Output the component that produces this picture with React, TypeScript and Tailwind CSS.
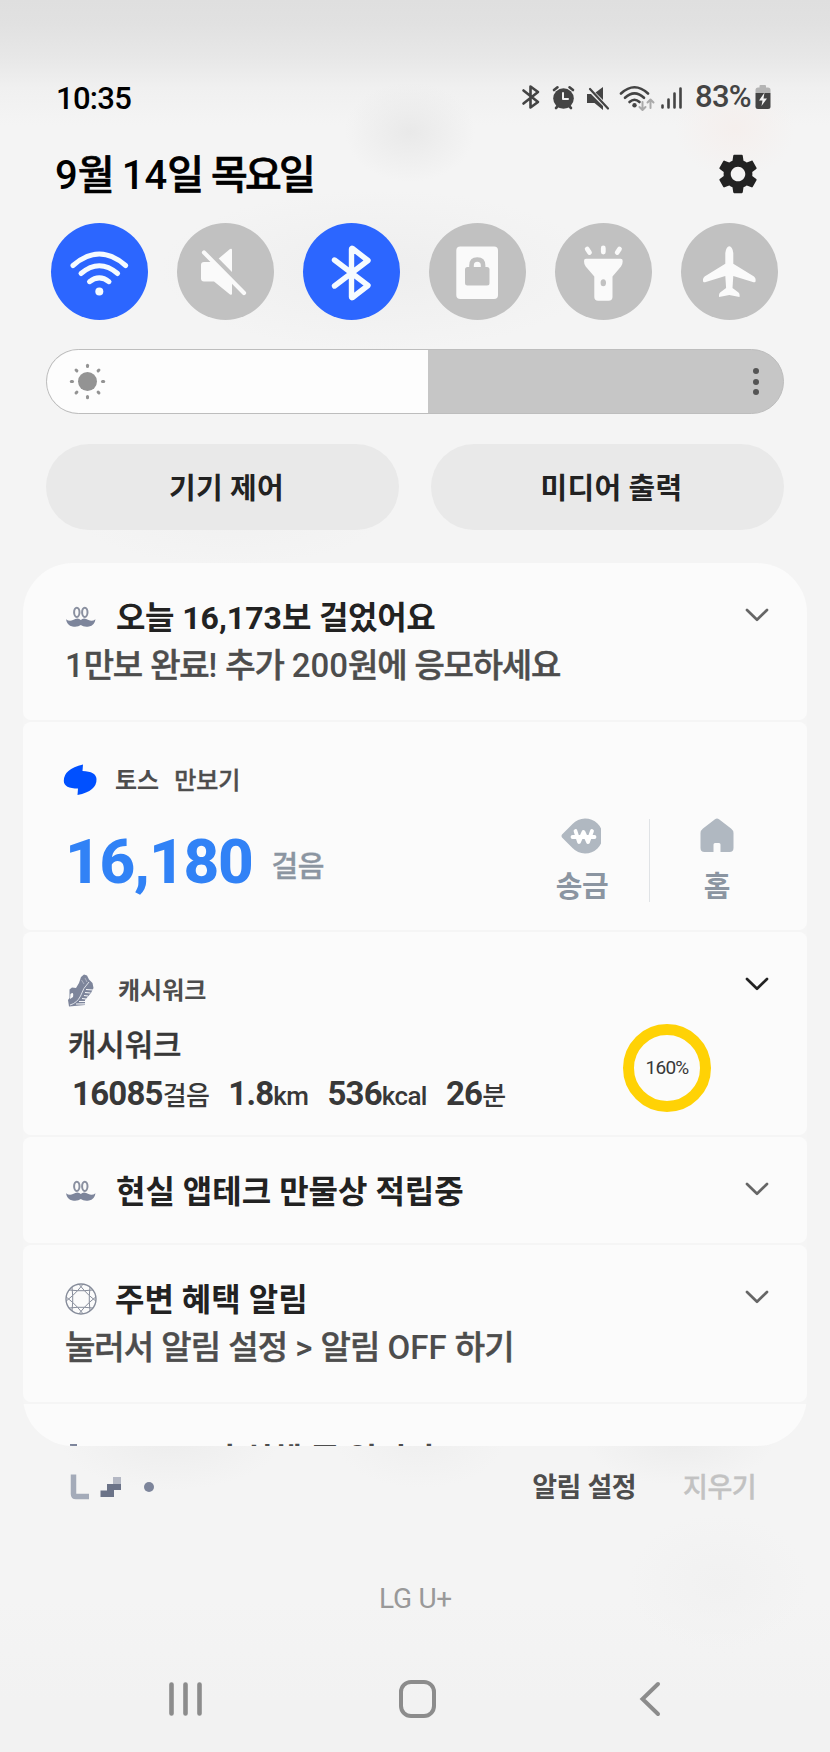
import React from "react";

const HANGUL = /([\u3131-\uD7A3]+)/;

function Mixed({ text, ko = "tracking-[-0.03em]" }: { text: string; ko?: string }) {
  return (
    <>
      {text.split(HANGUL).map((part, i) =>
        HANGUL.test(part) ? (
          <span key={i} className={ko}>
            {part}
          </span>
        ) : (
          part
        ),
      )}
    </>
  );
}

function StatusIcons() {
  return (
    <svg width="162" height="30" viewBox="0 0 162 30" className="shrink-0" fill="none" stroke="#444" strokeLinecap="round" strokeLinejoin="round">
      <path d="M2.5 8.5 L17 20 L9.5 25.5 V4.5 L17 10 L2.5 21.5" strokeWidth="2.6" />
      <g>
        <circle cx="42.500" cy="16.500" r="10.3" fill="#444" stroke="none" />
        <path d="M33 8 L36.500 5.300 M52 8 L48.500 5.300 M35 26 L37 24 M50 26 L48 24" strokeWidth="2.6" />
        <path d="M42 11 V17 H47" stroke="#f3f3f3" strokeWidth="2" />
      </g>
      <g stroke="none" fill="#444">
        <path d="M66 12 H70 L82 24 V28 L73.500 21 H66 Z" />
        <path d="M74.500 10.500 L82 5 V18 Z" />
      </g>
      <path d="M69 7 L87 26.5" strokeWidth="2.2" />
      <g strokeWidth="2.6">
        <path d="M100 11.500 Q113.500 -1 127 11.500" />
        <path d="M104 15.800 Q113.500 7 123 15.800" />
        <path d="M108.500 20 Q113.500 15.500 118.500 20" />
      </g>
      <circle cx="113.500" cy="23.200" r="2.200" fill="#444" stroke="none" />
      <path d="M121.500 20 V27.500 M118.500 25 L121.500 28 L124.500 25 M129.500 26 V18.500 M126.500 20.500 L129.500 17.500 L132.500 20.500" stroke="#aaa" strokeWidth="2" />
      <path d="M141.500 23.500 V25.500 M147.500 17.500 V25.500 M153.500 11.500 V25.500 M159.500 6.500 V25.500" strokeWidth="2.600" />
    </svg>
  );
}

function Battery() {
  return (
    <svg width="16" height="26" viewBox="0 0 16 26" className="shrink-0">
      <path d="M0.500 9 V6 Q0.500 3.500 3 3.500 H4.500 V2 Q4.500 1 5.500 1 H10 Q11 1 11 2 V3.500 H13 Q15.500 3.500 15.500 6 V9 Z" fill="#b4b4b4" />
      <path d="M0.500 9 H15.500 V22.500 Q15.500 25 13 25 H3 Q0.500 25 0.500 22.500 Z" fill="#444" />
      <path d="M9.500 8.500 L4 16.500 H7.500 L6.500 22 L12 14.500 H8.500 Z" fill="#f4f4f4" />
    </svg>
  );
}

function Gear() {
  return (
    <svg width="46" height="46" viewBox="0 0 24 24" fill="#222" className="shrink-0">
      <path d="M19.430 12.980c.04-.32.07-.64.07-.98s-.03-.66-.07-.98l2.110-1.650c.19-.15.24-.42.12-.64l-2-3.460c-.12-.22-.39-.3-.61-.22l-2.490 1c-.52-.4-1.080-.73-1.690-.98l-.38-2.650C14.460 2.180 14.250 2 14 2h-4c-.25 0-.46.18-.49.42l-.38 2.650c-.61.25-1.170.59-1.690.98l-2.490-1c-.23-.09-.49 0-.61.22l-2 3.460c-.13.22-.07.49.12.64l2.110 1.650c-.04.32-.07.65-.07.98s.03.66.07.98l-2.110 1.650c-.19.15-.24.42-.12.64l2 3.460c.12.22.39.3.61.22l2.490-1c.52.4 1.080.73 1.690.98l.38 2.650c.03.24.24.42.49.42h4c.25 0 .46-.18.49-.42l.38-2.650c.61-.25 1.170-.59 1.690-.98l2.490 1c.23.09.49 0 .61-.22l2-3.460c.12-.22.07-.49-.12-.64l-2.110-1.650zM12 15.800c-2.100 0-3.800-1.700-3.800-3.800s1.700-3.800 3.800-3.800 3.800 1.700 3.800 3.800-1.700 3.800-3.800 3.800z" />
    </svg>
  );
}

function Toggle({ on, children }: { on?: boolean; children: React.ReactNode }) {
  return (
    <button className={on ? "size-[97px] rounded-full bg-[#2c66ff] text-[#f5fbff]" : "size-[97px] rounded-full bg-[#c1c1c1] text-[#fafafa]"}>
      <svg width="97" height="97" viewBox="0 0 97 97" fill="none" stroke="currentColor" strokeLinecap="round" strokeLinejoin="round">
        {children}
      </svg>
    </button>
  );
}

function Toggles() {
  return (
    <div className="mt-[22px] flex gap-[29px] pl-[51px]">
      <Toggle on>
        <g strokeWidth="5">
          <path d="M22 42.500 Q48.300 19.500 74.600 42.500" />
          <path d="M30 50.500 Q48.300 35 66.600 50.500" />
          <path d="M38.500 58.700 Q48.300 51 58 58.700" />
        </g>
        <circle cx="48.300" cy="68.500" r="4" fill="currentColor" stroke="none" />
      </Toggle>
      <Toggle>
        <g fill="currentColor" stroke="none">
          <path d="M27 39 H35.500 L55 58.500 V70.500 Q55 72.500 53 71.500 L37 58.500 H27 Q24 58.500 24 55.500 V42 Q24 39 27 39 Z" />
          <path d="M41.700 35.500 L53 26 Q55 25 55 27 V49 Z" />
        </g>
        <path d="M27 29.500 L67 70" strokeWidth="4.200" />
      </Toggle>
      <Toggle on>
        <path d="M31.500 37 L65 62.500 L49.500 74.500 Q48.500 75 48.500 74 V26 Q48.500 25 49.500 25.500 L65 37.500 L31.500 63" strokeWidth="5.400" />
      </Toggle>
      <Toggle>
        <rect x="27.300" y="23.500" width="41.700" height="52.500" rx="4" fill="currentColor" stroke="none" />
        <path d="M42.500 46 V42.500 Q42.500 36.500 48.300 36.500 Q54.100 36.500 54.100 42.500 V46" stroke="#c1c1c1" strokeWidth="4.600" />
        <rect x="36" y="44" width="24.500" height="18.500" rx="2.500" fill="#c1c1c1" stroke="none" />
      </Toggle>
      <Toggle>
        <path d="M31 35.700 H65.700 Q67.700 35.700 67.700 38 Q67.700 41.500 66 43.500 L57.500 53.500 V74 Q57.500 77.700 53.500 77.700 H43.200 Q39.300 77.700 39.300 74 V53.500 L30.700 43.500 Q29 41.500 29 38 Q29 35.700 31 35.700 Z" fill="currentColor" stroke="none" />
        <ellipse cx="48.300" cy="59.800" rx="2.700" ry="3.500" fill="#c1c1c1" stroke="none" />
        <path d="M48.300 25 V29 M32.200 26 L34.500 29.500 M64.500 26 L62.200 29.500" strokeWidth="4.800" />
      </Toggle>
      <Toggle>
        <path
          d="M48.300 23.300 Q51.300 23.300 52.300 30 V40.700 L73 53.500 Q74.600 54.800 74.600 56.500 V58 Q74.600 59.800 72.600 59.200 L52.300 53 L51.500 65 L57.500 69.500 Q59 71 58.500 74 L48.300 72 L38.100 74 Q37.600 71 39.100 69.500 L45.100 65 L44.300 53 L24 59.200 Q22 59.800 22 58 V56.500 Q22 54.800 23.600 53.500 L44.300 40.700 V30 Q45.300 23.300 48.300 23.300 Z"
          fill="currentColor"
          stroke="none"
        />
      </Toggle>
    </div>
  );
}

function Brightness() {
  return (
    <div className="mx-[46px] mt-[29px] flex h-[65px] overflow-hidden rounded-full border border-[#bdbdbd] bg-[#c6c6c6]">
      <div className="flex w-[381px] items-center bg-[#fdfdfd] pl-[22px]">
        <svg width="37" height="37" viewBox="-18.500 -18.500 37 37" stroke="#939393" strokeWidth="3" strokeLinecap="round">
          <circle r="9.500" fill="#939393" stroke="none" />
          {[0, 45, 90, 135, 180, 225, 270, 315].map((a) => (
            <path key={a} d="M0 -15 V-16.200" transform={`rotate(${a})`} />
          ))}
        </svg>
      </div>
      <div className="flex flex-1 flex-col items-end justify-center gap-[4.500px] pr-[24px]">
        <span className="size-[6px] rounded-full bg-[#555]" />
        <span className="size-[6px] rounded-full bg-[#555]" />
        <span className="size-[6px] rounded-full bg-[#555]" />
      </div>
    </div>
  );
}

function Chevron({ dark }: { dark?: boolean }) {
  return (
    <svg width="24" height="14" viewBox="0 0 24 14" fill="none" stroke={dark ? "#222" : "#666"} strokeWidth="2.700" strokeLinecap="round" strokeLinejoin="round" className="shrink-0">
      <path d="M2 2 L12 11.800 L22 2" />
    </svg>
  );
}

function Mustache() {
  return (
    <svg width="30" height="22" viewBox="0 0 30 22" className="shrink-0">
      <g fill="none" stroke="#8a90a0" strokeWidth="2">
        <ellipse cx="10.800" cy="6.300" rx="2.700" ry="4.600" />
        <ellipse cx="18.800" cy="6.300" rx="2.700" ry="4.600" />
      </g>
      <path d="M0 13.200 Q3.500 16 7 14 Q12 11 14.800 14 Q17.500 11 22.500 14 Q26 16 29.500 13.200 Q28.500 19.500 23 20.600 Q17.500 21.400 14.800 19 Q12 21.400 6.500 20.600 Q1 19.500 0 13.200 Z" fill="#7d859b" />
    </svg>
  );
}

function Shoe() {
  return (
    <svg width="28" height="33" viewBox="0 0 28 33" className="shrink-0">
      <path d="M14 3 L17 0.500 L20 1.500 L22 5.500 L25.500 9 L26.500 14 L24 19 L18 26 V31 L2 32.500 L1 26 L2.500 24 L2.500 15.500 L5 13.500 L9 14 L12 9 Z" fill="#7d859b" />
      <path d="M3.500 20 Q7 17 6 23 L3 25 Z" fill="#fbfbfb" />
      <path d="M22 8 Q16 14 13.500 22 Q10 29 3 31" fill="none" stroke="#dfe2e9" strokeWidth="1" />
      <path d="M19 15.500 L26 16 M18 18.500 L23.500 19 M17 21.500 L21 22 M15 24.500 L19 25 M12 27.500 L18 27.500 M9 30 L18 29.800" stroke="#f5f6f8" strokeWidth="1.200" />
      <path d="M14.500 6 L17 10 M18 4 L20 8" stroke="#b9bdc9" strokeWidth="0.800" />
    </svg>
  );
}

function Gem() {
  const pt = (r: number, deg: number) =>
    `${(16 + r * Math.cos((deg * Math.PI) / 180)).toFixed(2)} ${(16 + r * Math.sin((deg * Math.PI) / 180)).toFixed(2)}`;
  const facets = Array.from({ length: 8 }, (_, i) => i * 45);
  return (
    <svg width="32" height="32" viewBox="0 0 32 32" fill="none" stroke="#868c9a" strokeWidth="1" strokeLinejoin="round" className="shrink-0">
      <circle cx="16" cy="16" r="15" strokeWidth="1.400" />
      <path d={"M" + facets.map((a) => pt(9, a + 22.5)).join(" L") + " Z"} />
      {facets.map((a) => (
        <path key={a} d={`M${pt(15, a - 8)} L${pt(9, a + 22.5)} L${pt(15, a + 53)}`} />
      ))}
    </svg>
  );
}

function Title({ icon, text, ko = "tracking-normal" }: { icon: React.ReactNode; text: string; ko?: string }) {
  return (
    <div className="flex h-[46px] items-center">
      <div className="flex w-[50px] shrink-0 items-center">{icon}</div>
      <h2 className="pt-px text-[32px] font-bold leading-[46px] text-[#222]">
        <Mixed text={text} ko={ko} />
      </h2>
      <div className="mb-[4px] ml-auto">
        <Chevron />
      </div>
    </div>
  );
}

function Stat({ value, unit }: { value: string; unit: string }) {
  return (
    <div className="flex items-baseline">
      <span className="text-[33px] font-bold tracking-[-0.800px]">{value}</span>
      <span className="text-[26px] font-medium tracking-[-0.600px]">{unit}</span>
    </div>
  );
}

export default function App() {
  return (
    <div className="flex h-[1752px] w-[830px] flex-col overflow-hidden bg-[#f4f4f4] bg-[radial-gradient(65px_50px_at_410px_132px,#e9e9e9_0%,transparent_100%),radial-gradient(60px_50px_at_735px_128px,#f5efed_0%,transparent_100%),radial-gradient(220px_80px_at_380px_270px,#eeeeee_0%,transparent_100%),radial-gradient(150px_45px_at_230px_520px,#f1f1f1_0%,transparent_100%),radial-gradient(110px_50px_at_170px_1440px,#ededed_0%,rgba(244,244,244,0)_100%),radial-gradient(85px_48px_at_420px_1440px,#efefef_0%,rgba(244,244,244,0)_100%),radial-gradient(95px_45px_at_680px_1440px,#ececec_0%,rgba(244,244,244,0)_100%),radial-gradient(90px_70px_at_718px_1584px,#f1f1f1_0%,rgba(244,244,244,0)_100%),linear-gradient(to_bottom,#dfdfdf_0px,#e1e1e1_24px,#e7e7e7_56px,#f0f0f0_88px,#f4f4f4_125px,#f4f4f4_1600px,#f2f2f2_1700px)] font-[Roboto,'Noto_Sans_CJK_KR',sans-serif]">
      <header className="pt-[78px]">
        <div className="flex h-10 items-start pl-[56px] pr-[59px] text-[31px] leading-10">
          <span className="pt-px font-medium tracking-[-0.700px] text-black">10:35</span>
          <div className="ml-auto flex h-[37px] items-center">
            <StatusIcons />
            <span className="ml-[12px] font-medium tracking-[-0.700px] text-[#444]">83%</span>
            <span className="ml-[4px]">
              <Battery />
            </span>
          </div>
        </div>
        <div className="mt-[33px] flex h-[50px] items-start justify-between pl-[55px] pr-[69px]">
          <h1 className="text-[40px] font-medium leading-[50px] text-black">
            <Mixed text="9월 14일 목요일" ko="tracking-[-0.07em] [-webkit-text-stroke:0.7px]" />
          </h1>
          <Gear />
        </div>
      </header>

      <Toggles />
      <Brightness />

      <div className="mx-[46px] mt-[30px] flex justify-between text-[29px] font-bold text-[#222]">
        <button className="h-[86px] w-[353px] rounded-full bg-[#e9e9e9] pl-[8px] pt-[5px]">
          <Mixed text="기기 제어" ko="tracking-[0.01em]" />
        </button>
        <button className="h-[86px] w-[353px] rounded-full bg-[#e9e9e9] pl-[8px] pt-[5px]">
          <Mixed text="미디어 출력" ko="tracking-[0.01em]" />
        </button>
      </div>

      <main className="mx-[23px] mt-[33px] flex h-[883px] shrink-0 flex-col gap-[2px] overflow-hidden rounded-[50px] bg-[#f5f5f5]">
        <section className="h-[157px] shrink-0 rounded-b-lg bg-[#fbfbfb] pl-[43px] pr-[38px] pt-[31px]">
          <Title icon={<Mustache />} text="오늘 16,173보 걸었어요" ko="tracking-[-0.01em]" />
          <p className="-ml-[1px] mt-[3px] text-[33px] font-medium leading-[46px] text-[#4d4d4d]">
            <Mixed text="1만보 완료! 추가 200원에 응모하세요" ko="tracking-[-0.038em] [-webkit-text-stroke:0.5px]" />
          </p>
        </section>

        <section className="flex h-[208px] shrink-0 flex-col rounded-lg bg-[#fbfbfb] pl-[40px] pr-[24px] pt-[38px]">
          <div className="flex h-[40px] items-center text-[24px] leading-[40px] text-[#4d4d4d]">
            <svg width="34" height="32" viewBox="0 0 34 32" className="shrink-0">
              <path d="M20 0.500 L19.500 7 Q33 7.500 33.500 15 Q34 27 14.500 31 L15 24.500 Q1 24.500 0.800 17 Q0.500 5 20 0.500 Z" fill="#0050ff" />
            </svg>
            <span className="ml-[18px] pt-[2px] font-bold">토스</span>
            <span className="ml-[15px] pt-[2px] font-medium [-webkit-text-stroke:0.4px]">만보기</span>
          </div>
          <div className="flex">
            <div className="mt-[30px] flex h-[64px] items-start pl-[2px]">
              <span className="text-[62px] font-extrabold leading-[64px] tracking-[-1.200px] text-[#3182f6]">16,180</span>
              <span className="ml-[19px] mt-[17px] text-[29px] font-medium leading-[40px] tracking-[-0.5px] text-[#8b95a1] [-webkit-text-stroke:0.4px]">걸음</span>
            </div>
            <div className="-mr-px ml-auto mt-[18px] flex text-[29px] font-bold text-[#8b95a1]">
              <div className="flex w-[134px] flex-col items-center">
                <svg width="40" height="36" viewBox="0 0 40 36" className="-ml-[2px]">
                  <path d="M11.500 6 A17.500 17.500 0 1 1 11.500 30 L1 19.500 Q0 18 1 16.500 Z" fill="#b0b8c1" />
                  <path d="M11.500 19 H33.500 M14.500 13 L18 24 L22.500 14 L27 24 L31 13" fill="none" stroke="#fff" strokeWidth="3.800" strokeLinecap="round" strokeLinejoin="round" />
                </svg>
                <span className="mt-[13px] leading-[40px] tracking-[-0.5px]">송금</span>
              </div>
              <div className="mt-px h-[83px] w-px bg-[#e0e3e6]" />
              <div className="flex w-[134px] flex-col items-center">
                <svg width="34" height="36" viewBox="0 0 34 36">
                  <path d="M15 1.200 Q17 -0.200 19 1.200 L31 10.500 Q33.500 12.500 33.500 15 V30 Q33.500 34 29.500 34 H20.500 V26.500 Q20.500 25 19 25 H15 Q13.500 25 13.500 26.500 V34 H4.500 Q0.500 34 0.500 30 V15 Q0.500 12.500 3 10.500 Z" fill="#b0b8c1" />
                </svg>
                <span className="mt-[13px] leading-[40px]">홈</span>
              </div>
            </div>
          </div>
        </section>

        <section className="h-[203px] shrink-0 rounded-lg bg-[#fbfbfb] pl-[44px] pr-[38px] pt-[38px]">
          <div className="flex h-[40px] text-[24px] font-bold leading-[42px] text-[#4d4d4d]">
            <div className="flex w-[51px] items-center">
              <Shoe />
            </div>
            <span>캐시워크</span>
            <div className="ml-auto flex h-[28px] items-center">
              <Chevron dark />
            </div>
          </div>
          <div className="flex text-[#383838]">
            <div>
              <p className="mt-[16px] pl-px text-[31px] font-medium leading-[40px] tracking-[-0.2px] [-webkit-text-stroke:0.4px]">캐시워크</p>
              <div className="mt-[8px] flex gap-[19px] pl-[5px] leading-[40px]">
                <Stat value="16085" unit="걸음" />
                <Stat value="1.8" unit="km" />
                <Stat value="536" unit="kcal" />
                <Stat value="26" unit="분" />
              </div>
            </div>
            <div className="ml-auto mr-[58px] mt-[14px] flex size-[88px] items-center justify-center rounded-full border-[11px] border-[#ffd205] text-[19px] tracking-[-0.700px]">160%</div>
          </div>
        </section>

        <section className="h-[106px] shrink-0 rounded-lg bg-[#fbfbfb] pl-[43px] pr-[38px] pt-[31px]">
          <Title icon={<Mustache />} text="현실 앱테크 만물상 적립중" />
        </section>

        <section className="h-[157px] shrink-0 rounded-lg bg-[#fbfbfb] pl-[42px] pr-[38px] pt-[31px]">
          <Title icon={<Gem />} text="주변 혜택 알림" />
          <p className="mt-[3px] text-[33px] font-medium leading-[46px] text-[#4d4d4d]">
            <Mixed text="눌러서 알림 설정 > 알림 OFF 하기" ko="tracking-[-0.03em] [-webkit-text-stroke:0.5px]" />
          </p>
        </section>

        <section className="flex shrink-0 items-start bg-[#fbfbfb] pl-[47px] pt-[33px]">
          <span className="mt-[7px] h-[20px] w-[7px] bg-[#7d859b]" />
          <span className="ml-[129px] pt-[3px] text-[32px] font-bold leading-[40px] text-[#4d4d4d]">
            <Mixed text="이 실행 중 입니다" ko="tracking-normal" />
          </span>
        </section>
      </main>

      <footer className="flex h-[52px] items-start pl-[70px] pr-[74px] pt-[27px] text-[27px] leading-[30px]">
        <svg width="86" height="28" viewBox="0 0 86 28" className="shrink-0">
          <path d="M3.500 1.500 V21 Q3.500 23.500 6 23.500 H19" fill="none" stroke="#a4abb9" strokeWidth="5.500" strokeLinecap="butt" />
          <path d="M43 4 H51 V11 H43 Z" fill="#b4b8c4" />
          <path d="M37 11 H51 V17 H44 V24 H30.500 V17.500 H37 Z" fill="#6b7388" />
          <circle cx="79" cy="14" r="5" fill="#7d859b" />
        </svg>
        <span className="ml-auto font-bold text-[#4d4d4d]">
          <Mixed text="알림 설정" ko="tracking-[-0.02em]" />
        </span>
        <span className="ml-[47px] font-medium tracking-[-0.02em] text-[#c2c2c2] [-webkit-text-stroke:0.4px]">지우기</span>
      </footer>

      <p className="mt-[81px] pl-px text-center text-[28px] leading-[40px] tracking-[-0.3px] text-[#999]">LG U+</p>

      <nav className="mt-[61px] flex items-center pl-[169px] text-[#8c8c8c]">
        <svg width="34" height="38" viewBox="0 0 34 38" stroke="currentColor" strokeWidth="4.600" strokeLinecap="round">
          <path d="M2.500 4.500 V33.500 M16.500 4.500 V33.500 M30.500 4.500 V33.500" />
        </svg>
        <span className="ml-[196px] h-[38px] w-[37px] rounded-[12px] border-[4.500px] border-current" />
        <svg width="22" height="38" viewBox="0 0 22 38" fill="none" stroke="currentColor" strokeWidth="4" strokeLinecap="round" strokeLinejoin="miter" className="ml-[203px]">
          <path d="M19 4 L3.500 19 L19 34" />
        </svg>
      </nav>
    </div>
  );
}
